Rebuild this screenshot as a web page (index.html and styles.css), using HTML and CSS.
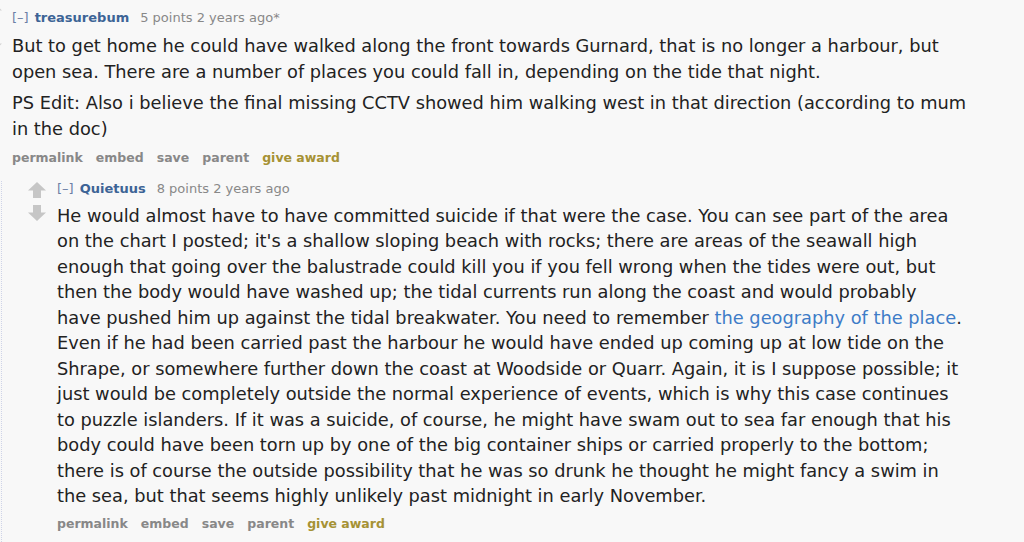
FILE: index.html
```html
<!DOCTYPE html>
<html lang="en">
<head>
<meta charset="utf-8">
<title>Comments</title>
<link rel="stylesheet" href="styles.css">
</head>
<body>
<div class="thread">
  <div class="comment top">
    <div class="midcol edge">
      <svg class="arrow" viewBox="0 0 18 16" width="18" height="16"><path d="M9 0 L18 8.5 H13 V16 H5 V8.5 H0 Z"/></svg>
      <svg class="arrow" viewBox="0 0 18 16" width="18" height="16"><path d="M9 16 L18 7.5 H13 V0 H5 V7.5 H0 Z"/></svg>
    </div>
    <div class="body">
      <div class="entry">
        <p class="tagline"><a class="expand">[–]</a><a class="author">treasurebum</a><span class="score">5 points</span> <span class="time">2 years ago</span>*</p>
        <div class="md">
          <p>But to get home he could have walked along the front towards Gurnard, that is no longer a harbour, but<br>open sea. There are a number of places you could fall in, depending on the tide that night.</p>
          <p>PS Edit: Also i believe the final missing CCTV showed him walking west in that direction (according to mum<br>in the doc)</p>
        </div>
        <ul class="buttons">
          <li>permalink</li>
          <li>embed</li>
          <li>save</li>
          <li>parent</li>
          <li class="award">give award</li>
        </ul>
      </div>
    </div>
  </div>
  <div class="child">
    <div class="comment nested">
      <div class="midcol">
        <svg class="arrow" viewBox="0 0 18 16" width="18" height="16"><path d="M9 0 L18 8.5 H13 V16 H5 V8.5 H0 Z"/></svg>
        <svg class="arrow" viewBox="0 0 18 16" width="18" height="16"><path d="M9 16 L18 7.5 H13 V0 H5 V7.5 H0 Z"/></svg>
      </div>
      <div class="entry">
        <p class="tagline"><a class="expand">[–]</a><a class="author">Quietuus</a><span class="score">8 points</span> <span class="time">2 years ago</span></p>
        <div class="md">
          <p>He would almost have to have committed suicide if that were the case. You can see part of the area<br>on the chart I posted; it's a shallow sloping beach with rocks; there are areas of the seawall high<br>enough that going over the balustrade could kill you if you fell wrong when the tides were out, but<br>then the body would have washed up; the tidal currents run along the coast and would probably<br>have pushed him up against the tidal breakwater. You need to remember <a class="link">the geography of the place</a>.<br>Even if he had been carried past the harbour he would have ended up coming up at low tide on the<br>Shrape, or somewhere further down the coast at Woodside or Quarr. Again, it is I suppose possible; it<br>just would be completely outside the normal experience of events, which is why this case continues<br>to puzzle islanders. If it was a suicide, of course, he might have swam out to sea far enough that his<br>body could have been torn up by one of the big container ships or carried properly to the bottom;<br>there is of course the outside possibility that he was so drunk he thought he might fancy a swim in<br>the sea, but that seems highly unlikely past midnight in early November.</p>
        </div>
        <ul class="buttons">
          <li>permalink</li>
          <li>embed</li>
          <li>save</li>
          <li>parent</li>
          <li class="award">give award</li>
        </ul>
      </div>
    </div>
  </div>
</div>
</body>
</html>
```

FILE: styles.css
```css
html, body {
  margin: 0;
  padding: 0;
  background: #f8f8f8;
}
body {
  width: 1024px;
  height: 542px;
  overflow: hidden;
  font-family: "DejaVu Sans", Verdana, sans-serif;
  color: #222;
}
.thread {
  padding-top: 10px;
}
.comment {
  display: flex;
}
.tagline {
  margin: 0;
  font-size: 13px;
  line-height: 16px;
  color: #888;
}
.expand {
  color: #6b7fa6;
  margin-right: 6px;
}
.author {
  color: #3d6496;
  font-weight: bold;
  margin-right: 11px;
}
.md {
  font-size: 17.8px;
  line-height: 25.5px;
  margin-top: 7.5px;
  white-space: nowrap;
}
.md p {
  margin: 0 0 5.5px 0;
}
.top .md {
  line-height: 25.75px;
  margin-top: 7px;
}
.link {
  color: #3e7cc7;
}
.buttons {
  list-style: none;
  margin: 8px 0 0 0;
  padding: 0;
  display: flex;
  gap: 13px;
  font-size: 12.5px;
  line-height: 16px;
  font-weight: bold;
  color: #888;
}
.buttons .award {
  color: #a69234;
}
.child {
  margin-top: 15px;
  margin-left: 1px;
  border-left: 1px dotted #cfd4e8;
  padding-bottom: 40px;
}
.nested .md {
  margin-top: 6px;
}
.nested .buttons {
  margin-top: 7px;
}
.midcol {
  margin-left: 26px;
  width: 18px;
  flex: none;
  margin-right: 11px;
  display: flex;
  flex-direction: column;
  gap: 7px;
  padding-top: 1px;
}
.midcol.edge {
  margin-left: -16px;
  margin-top: -8px;
  margin-right: 10px;
  gap: 17.5px;
  padding-top: 0;
}
.edge .arrow {
  fill: #d4d4d4;
}
.arrow {
  display: block;
  fill: #c6c6c6;
}
```
